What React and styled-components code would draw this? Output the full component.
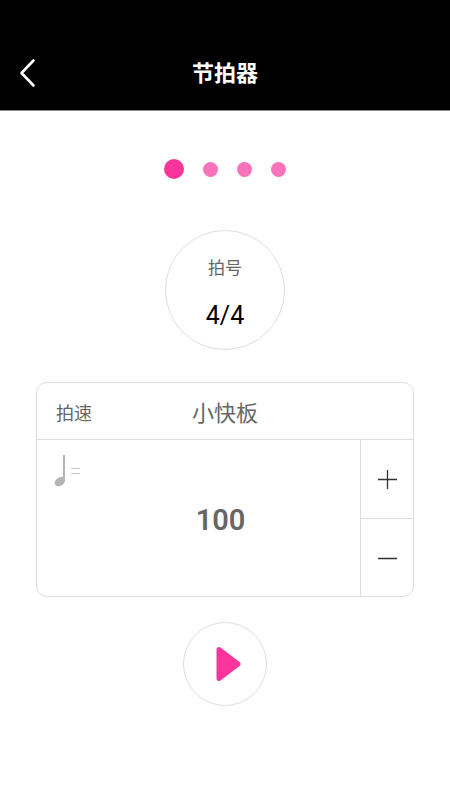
import React, { useState } from "react"
import styled, { createGlobalStyle } from "styled-components"

const colors = {
  pink: "#fb359b",
  pinkLight: "#f973bb",
  line: "#dedede",
  text: "#666666",
}

const beats = [1, 2, 3, 4]

function App() {
  const [bpm, setBpm] = useState(100)
  const [active] = useState(1)

  return (
    <Page>
      <GlobalStyle />
      <Header>
        <BackButton type="button" aria-label="返回">
          <svg width="18" height="30" viewBox="0 0 18 30" fill="none">
            <path
              d="M14.5 2.5 L2.5 15 L14.5 27.5"
              stroke="#fff"
              strokeWidth="2.6"
              strokeLinecap="round"
              strokeLinejoin="round"
            />
          </svg>
        </BackButton>
        <Title>节拍器</Title>
      </Header>
      <Content>
        <Beats>
          {beats.map((beat) => (
            <Beat key={beat} $active={beat === active} />
          ))}
        </Beats>
        <SignatureButton type="button">
          <SignatureLabel>拍号</SignatureLabel>
          <SignatureValue>4/4</SignatureValue>
        </SignatureButton>
        <TempoCard>
          <TempoHeader>
            <TempoLabel>拍速</TempoLabel>
            <TempoName>小快板</TempoName>
          </TempoHeader>
          <TempoBody>
            <NoteIcon width="28" height="34" viewBox="0 0 28 34">
              <ellipse
                cx="6"
                cy="27.5"
                rx="5.8"
                ry="4"
                fill="#b5b5b5"
                transform="rotate(-38 6 27.5)"
              />
              <path d="M10 1 V26" stroke="#b5b5b5" strokeWidth="2" />
              <path d="M17 14.5 H26 M17 19.5 H26" stroke="#c4c4c4" />
            </NoteIcon>
            <TempoValue>{bpm}</TempoValue>
          </TempoBody>
          <Stepper>
            <StepButton
              type="button"
              aria-label="加"
              onClick={() => setBpm(bpm + 1)}
            >
              <svg width="20" height="20" viewBox="0 0 20 20">
                <path
                  d="M1 10.5 H20 M10.5 1 V20"
                  stroke="#333"
                  strokeWidth="1.3"
                />
              </svg>
            </StepButton>
            <StepButton
              type="button"
              aria-label="减"
              onClick={() => setBpm(bpm - 1)}
            >
              <svg width="20" height="20" viewBox="0 0 20 20">
                <path d="M1 10.5 H20" stroke="#333" strokeWidth="1.3" />
              </svg>
            </StepButton>
          </Stepper>
        </TempoCard>
        <PlayButton type="button" aria-label="播放">
          <svg width="28" height="36" viewBox="0 0 28 36">
            <path
              d="M5 3.5 L24 18 L5 32.5 Z"
              fill={colors.pink}
              stroke={colors.pink}
              strokeWidth="5"
              strokeLinejoin="round"
            />
          </svg>
        </PlayButton>
      </Content>
    </Page>
  )
}

export default App

const GlobalStyle = createGlobalStyle`
  * {
    box-sizing: border-box;
  }

  body {
    margin: 0;
    background: #fff;
    font-family: Roboto, "Noto Sans CJK SC", sans-serif;
  }

  button {
    padding: 0;
    border: none;
    background: none;
    font: inherit;
    cursor: pointer;
  }

  svg {
    display: block;
  }
`

const Page = styled.div`
  min-height: 100vh;
  background: #fff;
`

const Header = styled.header`
  display: grid;
  grid-template-columns: 56px 1fr 56px;
  align-items: center;
  height: 111px;
  padding-top: 36px;
  background: #000;
  border-bottom: 1px solid #8a8a8a;
`

const BackButton = styled.button`
  display: flex;
  align-items: center;
  height: 56px;
  padding-left: 19px;
`

const Title = styled.h1`
  margin: 0;
  padding-top: 2px;
  color: #fff;
  font-size: 22px;
  font-weight: 700;
  line-height: 32px;
  text-align: center;
`

const Content = styled.main`
  display: flex;
  flex-direction: column;
  align-items: center;
  padding: 48px 36px;
`

const Beats = styled.div`
  display: flex;
  align-items: center;
  gap: 19px;
  height: 20px;
`

const Beat = styled.span`
  width: ${(props) => (props.$active ? 20 : 15)}px;
  height: ${(props) => (props.$active ? 20 : 15)}px;
  border-radius: 50%;
  background: ${(props) => (props.$active ? colors.pink : colors.pinkLight)};
`

const SignatureButton = styled.button`
  display: flex;
  flex-direction: column;
  align-items: center;
  justify-content: center;
  gap: 16px;
  width: 120px;
  height: 120px;
  margin-top: 51px;
  padding-top: 4px;
  border: 1px solid ${colors.line};
  border-radius: 50%;
`

const SignatureLabel = styled.span`
  color: ${colors.text};
  font-size: 17px;
  line-height: 32px;
`

const SignatureValue = styled.span`
  color: #000;
  font-size: 25px;
  line-height: 32px;
`

const TempoCard = styled.section`
  display: grid;
  grid-template-columns: 1fr 53px;
  grid-template-rows: 57px 156px;
  width: 100%;
  margin-top: 32px;
  border: 1px solid ${colors.line};
  border-radius: 11px;
  overflow: hidden;
`

const TempoHeader = styled.div`
  display: grid;
  grid-template-columns: 1fr auto 1fr;
  grid-column: 1 / -1;
  align-items: center;
  padding: 5px 19px 0;
  border-bottom: 1px solid ${colors.line};
`

const TempoLabel = styled.span`
  color: ${colors.text};
  font-size: 18px;
  line-height: 32px;
`

const TempoName = styled.span`
  color: ${colors.text};
  font-size: 22px;
  line-height: 32px;
`

const TempoBody = styled.div`
  display: grid;
  grid-template-columns: 28px 1fr;
  padding: 14px 17px 10px;
`

const NoteIcon = styled.svg`
  grid-area: 1 / 1;
`

// the value sits near the middle of the whole card, so it reaches under the stepper
const TempoValue = styled.output`
  grid-area: 1 / 1 / 2 / 3;
  align-self: center;
  margin-right: -44px;
  color: ${colors.text};
  font-size: 29px;
  font-weight: 600;
  line-height: 32px;
  text-align: center;
`

const Stepper = styled.div`
  display: grid;
  grid-template-rows: 1fr 1fr;
  border-left: 1px solid ${colors.line};
`

const StepButton = styled.button`
  display: flex;
  align-items: center;
  justify-content: center;

  & + & {
    border-top: 1px solid ${colors.line};
  }
`

const PlayButton = styled.button`
  display: flex;
  align-items: center;
  justify-content: center;
  width: 84px;
  height: 84px;
  margin-top: 25px;
  padding-left: 6px;
  border: 1px solid ${colors.line};
  border-radius: 50%;
`
